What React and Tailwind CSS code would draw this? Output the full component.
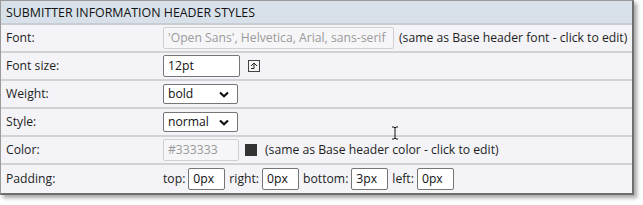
import React from 'react';

const font = { fontFamily: '"Open Sans", "Noto Sans", sans-serif' };

const Chevron = () => (
  <svg width="10" height="7" viewBox="0 0 10 7" className="absolute right-[8px] top-[6px]">
    <path d="M1 1.5 L5 5.2 L9 1.5" fill="none" stroke="#111" strokeWidth="2.2" />
  </svg>
);

const Select = ({ value }) => (
  <div className="relative w-[75px] h-[20px] border border-[#767676] rounded-[2px] bg-white text-[12.2px] leading-[18px] pl-[4px] text-[#111]">
    {value}
    <Chevron />
  </div>
);

const TextBox = ({ value, className = '', muted = false }) => (
  <div
    className={`h-[22px] border rounded-[2px] pl-[4px] text-[12.2px] leading-[20px] whitespace-nowrap overflow-hidden ${
      muted ? 'border-[#d0d0d0] bg-[#f6f6f8] text-[#9a9a9a]' : 'border-[#767676] bg-white text-[#111]'
    } ${className}`}
  >
    {value}
  </div>
);

const Row = ({ label, children, last }) => (
  <div className={`flex items-center h-[28px] ${last ? '' : 'border-b-2 border-[#d2d2d6]'}`}>
    <div className="w-[162px] pl-[5px] shrink-0">{label}</div>
    <div className="flex items-center whitespace-nowrap">{children}</div>
  </div>
);

export default function App() {
  return (
    <div className="bg-white w-[643px] h-[205px]" style={font}>
      <div className="relative w-[634px] border-l border-t border-[#9a9a9a] border-r-2 border-b-2 border-r-[#6e6e6e] border-b-[#6e6e6e] bg-[#f4f4f8] text-[12.2px] text-[#1e1e1e] shadow-[3px_3px_4px_rgba(0,0,0,0.35)]">
        <div className="h-[24px] bg-[#d8e1ea] border-b-2 border-[#c8cdd4] pl-[5px] leading-[23px] text-[12.4px] text-[#111]">
          SUBMITTER INFORMATION HEADER STYLES
        </div>
        <Row label="Font:">
          <TextBox muted value="'Open Sans', Helvetica, Arial, sans-serif" className="w-[231px]" />
          <span className="ml-[5px]">(same as Base header font - click to edit)</span>
        </Row>
        <Row label="Font size:">
          <TextBox value="12pt" className="w-[77px]" />
          <svg width="12" height="12" viewBox="0 0 12 12" className="ml-[8px]">
            <rect x="0.5" y="0.5" width="11" height="11" fill="#f4f4f4" stroke="#444" />
            <path d="M3 6 L6 3 L9 6 M6 3 V8.5 H3" fill="none" stroke="#222" strokeWidth="1" />
          </svg>
        </Row>
        <Row label="Weight:">
          <Select value="bold" />
        </Row>
        <Row label="Style:">
          <Select value="normal" />
        </Row>
        <Row label="Color:">
          <TextBox muted value="#333333" className="w-[76px]" />
          <div className="w-[12px] h-[12px] bg-[#333] ml-[6px]" />
          <span className="ml-[8px]">(same as Base header color - click to edit)</span>
        </Row>
        <Row label="Padding:" last>
          <span>top:</span>
          <TextBox value="0px" className="w-[37px] ml-[3px]" />
          <span className="ml-[4px]">right:</span>
          <TextBox value="0px" className="w-[37px] ml-[3px]" />
          <span className="ml-[4px]">bottom:</span>
          <TextBox value="3px" className="w-[37px] ml-[3px]" />
          <span className="ml-[4px]">left:</span>
          <TextBox value="0px" className="w-[37px] ml-[3px]" />
        </Row>
        <svg width="8" height="14" viewBox="0 0 8 14" className="absolute left-[390px] top-[125px]">
          <path d="M1 1 H3 L4 2 L5 1 H7 M4 2 V12 M1 13 H3 L4 12 L5 13 H7" fill="none" stroke="#111" strokeWidth="1" />
        </svg>
      </div>
    </div>
  );
}
